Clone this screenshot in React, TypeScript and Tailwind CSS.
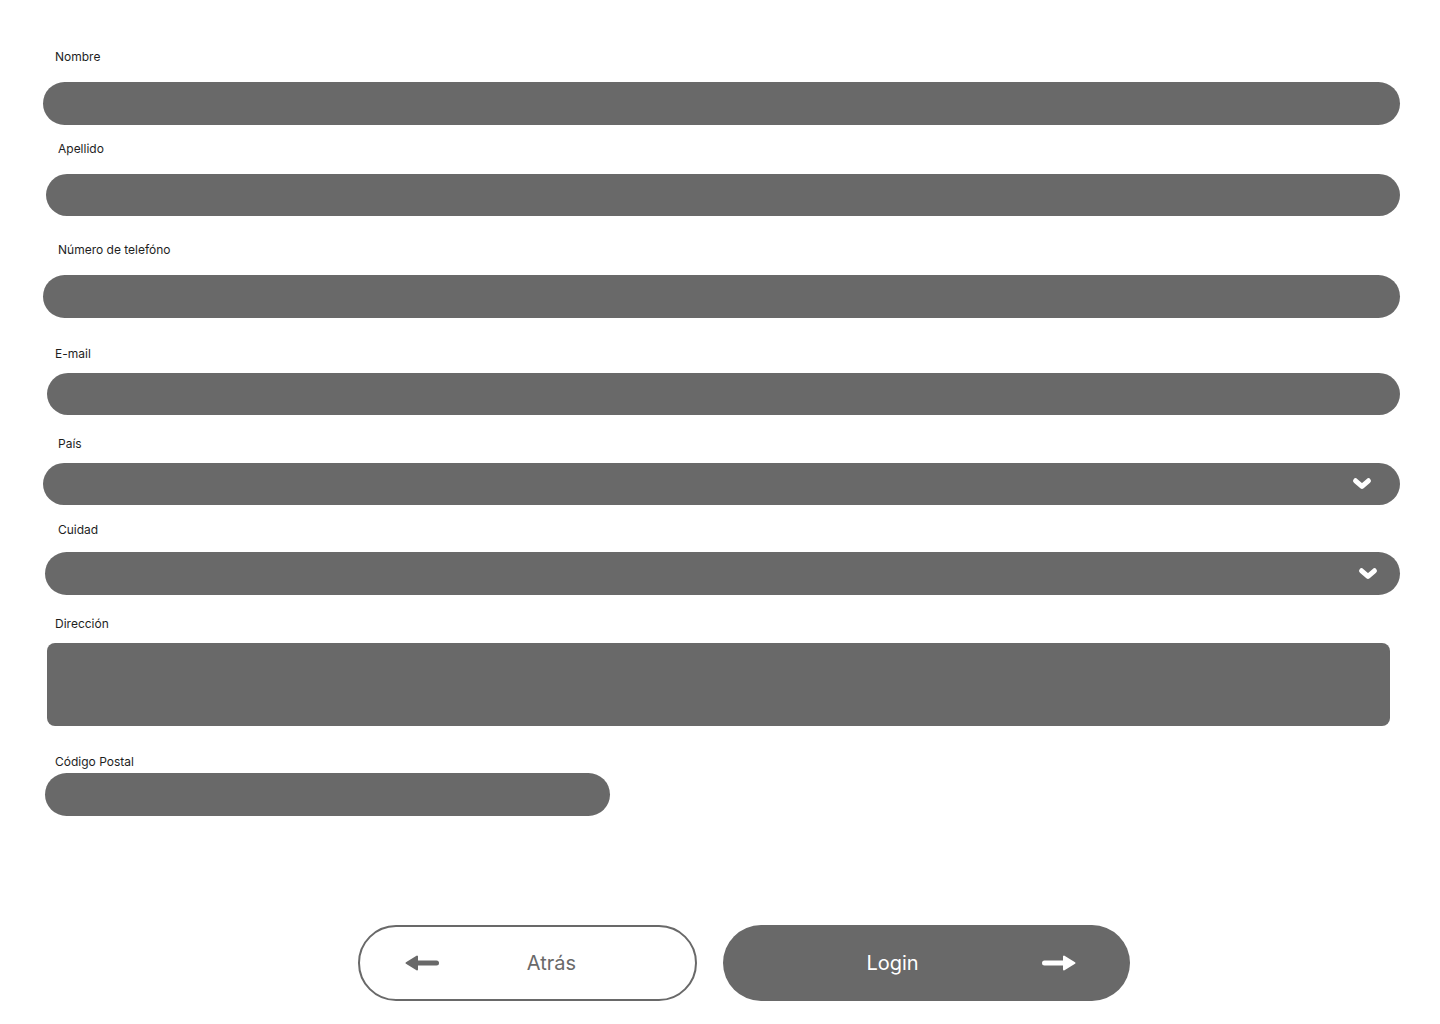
import React from "react";

const ChevronDown = () => (
  <svg viewBox="0 0 24 24" width="22" height="22" fill="none" xmlns="http://www.w3.org/2000/svg">
    <path d="M5 8.5L12 14.5L19 8.5" stroke="#ffffff" strokeWidth="5.5" strokeLinecap="round" strokeLinejoin="round" />
  </svg>
);

const ArrowLeft = ({ color }: { color: string }) => (
  <svg viewBox="0 0 34 16" width="34" height="16" xmlns="http://www.w3.org/2000/svg">
    <path d="M9 8H31.5" stroke={color} strokeWidth="5" strokeLinecap="round" />
    <path d="M1.5 8L12 1.5V14.5Z" fill={color} stroke={color} strokeWidth="2" strokeLinejoin="round" />
  </svg>
);

const ArrowRight = ({ color }: { color: string }) => (
  <svg viewBox="0 0 34 16" width="34" height="16" xmlns="http://www.w3.org/2000/svg">
    <path d="M2.5 8H25" stroke={color} strokeWidth="5" strokeLinecap="round" />
    <path d="M32.5 8L22 1.5V14.5Z" fill={color} stroke={color} strokeWidth="2" strokeLinejoin="round" />
  </svg>
);

const labelCls = "text-[12px] leading-[16px] text-[#1e1e1e]";
const pill = "rounded-full bg-[#696969]";

export default function App() {
  return (
    <div className="min-h-screen w-full bg-white font-['Inter','Liberation_Sans',sans-serif]">
      <div className="flex flex-col pt-[49px] pr-[40px]">
        {/* Nombre */}
        <span className={`${labelCls} ml-[55px]`}>Nombre</span>
        <div className={`${pill} ml-[43px] mt-[17px] h-[43px]`} />

        {/* Apellido */}
        <span className={`${labelCls} ml-[58px] mt-[16px]`}>Apellido</span>
        <div className={`${pill} ml-[46px] mt-[17px] h-[42px]`} />

        {/* Teléfono */}
        <span className={`${labelCls} ml-[58px] mt-[26px]`}>Número de telefóno</span>
        <div className={`${pill} ml-[43px] mt-[17px] h-[43px]`} />

        {/* E-mail */}
        <span className={`${labelCls} ml-[55px] mt-[28px]`}>E-mail</span>
        <div className={`${pill} ml-[47px] mt-[11px] h-[42px]`} />

        {/* País */}
        <span className={`${labelCls} ml-[58px] mt-[21px]`}>País</span>
        <div className={`${pill} ml-[43px] mt-[11px] h-[42px] flex items-center justify-end pr-[27px]`}>
          <ChevronDown />
        </div>

        {/* Cuidad */}
        <span className={`${labelCls} ml-[58px] mt-[17px]`}>Cuidad</span>
        <div className={`${pill} ml-[45px] mt-[14px] h-[43px] flex items-center justify-end pr-[21px]`}>
          <ChevronDown />
        </div>

        {/* Dirección */}
        <span className={`${labelCls} ml-[55px] mt-[21px]`}>Dirección</span>
        <div className="ml-[47px] mr-[10px] mt-[11px] h-[83px] rounded-[8px] bg-[#696969]" />

        {/* Código Postal */}
        <span className={`${labelCls} ml-[55px] mt-[28px]`}>Código Postal</span>
        <div className={`${pill} ml-[45px] mt-[3px] h-[43px] w-[565px]`} />
      </div>

      <div className="mt-[109px] flex items-center gap-[26px] pl-[358px]">
        <button className="flex h-[76px] w-[339px] items-center rounded-full border-2 border-[#696969] bg-white pl-[45px] pr-[31px]">
          <ArrowLeft color="#696969" />
          <span className="flex-1 text-center text-[20px] text-[#696969]">Atrás</span>
        </button>
        <button className="flex h-[76px] w-[407px] items-center rounded-full bg-[#696969] pl-[20px] pr-[54px]">
          <span className="flex-1 text-center text-[20px] text-white">Login</span>
          <ArrowRight color="#ffffff" />
        </button>
      </div>
    </div>
  );
}
